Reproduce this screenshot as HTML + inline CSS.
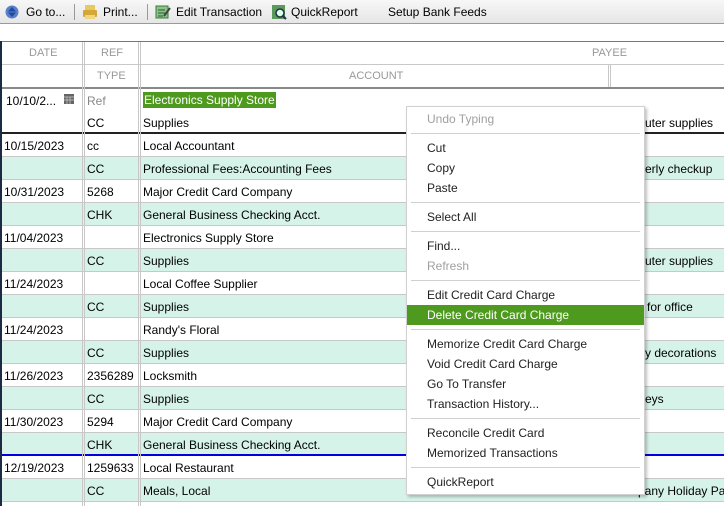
<!DOCTYPE html><html><head><style>
*{margin:0;padding:0;box-sizing:border-box}
body{width:724px;height:506px;overflow:hidden;background:#fff;font-family:"Liberation Sans",sans-serif;font-size:12px;color:#000;position:relative}
.a{position:absolute;white-space:nowrap}
.tb{left:0;top:0;width:724px;height:24px;background:linear-gradient(#f7f7f7,#e6e6e6);border-bottom:1px solid #9a9a9a}
.hd{color:#999;font-size:11px}
.r{position:absolute;left:0;width:724px;height:23px;border-bottom:1px solid #c8c8c8;overflow:hidden}
.g{background:#d6f3e9}
.r span{position:absolute;top:5px;white-space:nowrap}
.vl{position:absolute;width:3px;border-left:1px solid #c8c8c8;border-right:1px solid #c8c8c8;z-index:2}
.m{left:406px;top:106px;width:239px;height:389px;background:#fff;border:1px solid #d0d0d0;box-shadow:2px 2px 3px rgba(0,0,0,.25);z-index:5}
.mi{position:absolute;left:20px;color:#222}
.dis{color:#a0a0a0}
.sep{position:absolute;left:4px;width:229px;height:1px;background:#d0d0d0}
</style></head><body>
<div class="a tb"></div>
<svg class="a" style="left:5px;top:5px" width="14" height="14"><circle cx="7" cy="7" r="6.5" fill="#5a7fc8"/><path d="M7 2 L11 6.5 H3Z" fill="#1e4aa0"/><path d="M7 12 L11 7.5 H3Z" fill="#1e4aa0"/></svg>
<div class="a" style="left:26px;top:5px">Go to...</div>
<div class="a" style="left:74px;top:4px;width:1px;height:16px;background:#999"></div>
<svg class="a" style="left:82px;top:4px" width="16" height="16"><rect x="3" y="1" width="10" height="5" fill="#e8c860"/><rect x="1" y="6" width="14" height="7" rx="1" fill="#d4a838"/><rect x="3" y="11" width="10" height="4" fill="#f0d680"/></svg>
<div class="a" style="left:103px;top:5px">Print...</div>
<div class="a" style="left:147px;top:4px;width:1px;height:16px;background:#999"></div>
<svg class="a" style="left:155px;top:4px" width="16" height="16"><rect x="1" y="2" width="12" height="12" fill="#8bc48b" stroke="#3a7a3a"/><path d="M3 6h7M3 9h7M3 12h5" stroke="#2a5a2a"/><path d="M9 12 L15 4" stroke="#444" stroke-width="2"/></svg>
<div class="a" style="left:176px;top:5px">Edit Transaction</div>
<svg class="a" style="left:271px;top:4px" width="16" height="16"><rect x="1" y="1" width="13" height="14" fill="#5a9a5a"/><circle cx="9" cy="9" r="4" fill="#dfe" stroke="#234" stroke-width="1.5"/><path d="M12 12l3 3" stroke="#234" stroke-width="2"/></svg>
<div class="a" style="left:291px;top:5px">QuickReport</div>
<div class="a" style="left:388px;top:5px">Setup Bank Feeds</div>
<div class="a" style="left:0;top:41px;width:724px;height:1px;background:#777"></div>
<div class="a" style="left:0;top:64px;width:724px;height:1px;background:#c8c8c8"></div>
<div class="a" style="left:0;top:87px;width:724px;height:2px;background:#888"></div>
<div class="a hd" style="left:29px;top:47px">DATE</div>
<div class="a hd" style="left:101px;top:47px">REF</div>
<div class="a hd" style="left:592px;top:47px">PAYEE</div>
<div class="a hd" style="left:97px;top:70px">TYPE</div>
<div class="a hd" style="left:349px;top:70px">ACCOUNT</div>
<div class="vl" style="left:608px;top:65px;height:22px"></div>
<div class="a" style="left:6px;top:94px">10/10/2...</div>
<svg class="a" style="left:64px;top:94px" width="10" height="10"><rect width="10" height="10" fill="#666"/><path d="M0 3h10M0 6h10M3 3v7M6 3v7" stroke="#ccc" stroke-width=".7"/></svg>
<div class="a" style="left:87px;top:94px;color:#888">Ref</div>
<div class="a" style="left:143px;top:92px;background:#4e9a1e;color:#fff;padding:1px 1px;height:16px">Electronics Supply Store</div>
<div class="a" style="left:87px;top:116px">CC</div>
<div class="a" style="left:143px;top:116px">Supplies</div>
<div class="a" style="left:645px;top:116px">uter supplies</div>
<div class="a" style="left:0;top:132px;width:724px;height:2px;background:#222"></div>
<div class="r" style="top:134px"><span style="left:4px">10/15/2023</span><span style="left:87px">cc</span><span style="left:143px">Local Accountant</span></div>
<div class="r g" style="top:157px"><span style="left:87px">CC</span><span style="left:143px">Professional Fees:Accounting Fees</span><span style="left:645px">erly checkup</span></div>
<div class="r" style="top:180px"><span style="left:4px">10/31/2023</span><span style="left:87px">5268</span><span style="left:143px">Major Credit Card Company</span></div>
<div class="r g" style="top:203px"><span style="left:87px">CHK</span><span style="left:143px">General Business Checking Acct.</span></div>
<div class="r" style="top:226px"><span style="left:4px">11/04/2023</span><span style="left:143px">Electronics Supply Store</span></div>
<div class="r g" style="top:249px"><span style="left:87px">CC</span><span style="left:143px">Supplies</span><span style="left:645px">uter supplies</span></div>
<div class="r" style="top:272px"><span style="left:4px">11/24/2023</span><span style="left:143px">Local Coffee Supplier</span></div>
<div class="r g" style="top:295px"><span style="left:87px">CC</span><span style="left:143px">Supplies</span><span style="left:647px">for office</span></div>
<div class="r" style="top:318px"><span style="left:4px">11/24/2023</span><span style="left:143px">Randy's Floral</span></div>
<div class="r g" style="top:341px"><span style="left:87px">CC</span><span style="left:143px">Supplies</span><span style="left:645px">y decorations</span></div>
<div class="r" style="top:364px"><span style="left:4px">11/26/2023</span><span style="left:87px">2356289</span><span style="left:143px">Locksmith</span></div>
<div class="r g" style="top:387px"><span style="left:87px">CC</span><span style="left:143px">Supplies</span><span style="left:645px">eys</span></div>
<div class="r" style="top:410px"><span style="left:4px">11/30/2023</span><span style="left:87px">5294</span><span style="left:143px">Major Credit Card Company</span></div>
<div class="r g" style="top:433px;border-bottom:2px solid #0000e0"><span style="left:87px">CHK</span><span style="left:143px">General Business Checking Acct.</span></div>
<div class="r" style="top:456px"><span style="left:4px">12/19/2023</span><span style="left:87px">1259633</span><span style="left:143px">Local Restaurant</span></div>
<div class="r g" style="top:479px"><span style="left:87px">CC</span><span style="left:143px">Meals, Local</span><span style="left:638px">pany Holiday Pa</span></div>
<div class="vl" style="left:82px;top:42px;height:464px"></div>
<div class="vl" style="left:138px;top:42px;height:464px"></div>
<div class="a" style="left:0;top:41px;width:2px;height:465px;background:#1d2a44;z-index:3"></div>
<div class="a m">
<div class="mi dis" style="top:5px">Undo Typing</div>
<div class="sep" style="top:26px"></div>
<div class="mi" style="top:34px">Cut</div>
<div class="mi" style="top:54px">Copy</div>
<div class="mi" style="top:74px">Paste</div>
<div class="sep" style="top:95px"></div>
<div class="mi" style="top:103px">Select All</div>
<div class="sep" style="top:124px"></div>
<div class="mi" style="top:132px">Find...</div>
<div class="mi dis" style="top:152px">Refresh</div>
<div class="sep" style="top:173px"></div>
<div class="mi" style="top:181px">Edit Credit Card Charge</div>
<div class="a" style="left:0;top:198px;width:237px;height:20px;background:#4e9a1e"></div>
<div class="mi" style="top:201px;color:#fff">Delete Credit Card Charge</div>
<div class="sep" style="top:222px"></div>
<div class="mi" style="top:230px">Memorize Credit Card Charge</div>
<div class="mi" style="top:250px">Void Credit Card Charge</div>
<div class="mi" style="top:270px">Go To Transfer</div>
<div class="mi" style="top:290px">Transaction History...</div>
<div class="sep" style="top:311px"></div>
<div class="mi" style="top:319px">Reconcile Credit Card</div>
<div class="mi" style="top:339px">Memorized Transactions</div>
<div class="sep" style="top:360px"></div>
<div class="mi" style="top:368px">QuickReport</div>
</div>
</body></html>
